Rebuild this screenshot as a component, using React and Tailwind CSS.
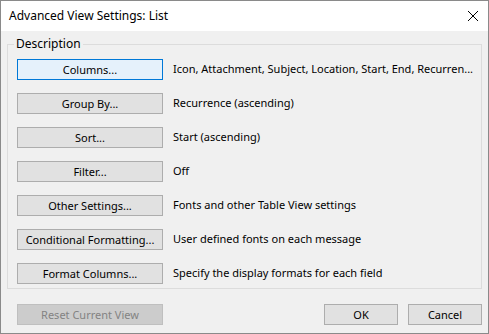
import React from 'react';

const rows = [
    { label: 'Columns...', desc: 'Icon, Attachment, Subject, Location, Start, End, Recurren...', focused: true },
    { label: 'Group By...', desc: 'Recurrence (ascending)' },
    { label: 'Sort...', desc: 'Start (ascending)' },
    { label: 'Filter...', desc: 'Off' },
    { label: 'Other Settings...', desc: 'Fonts and other Table View settings' },
    { label: 'Conditional Formatting...', desc: 'User defined fonts on each message' },
    { label: 'Format Columns...', desc: 'Specify the display formats for each field' },
];

const WinButton = ({ children, focused, disabled, className = '' }) => {
    let look = 'bg-[#e1e1e1] border-[#adadad] text-black';
    if (focused) look = 'bg-[#e5f1fb] border-[#0078d7] text-black';
    if (disabled) look = 'bg-[#cccccc] border-[#bfbfbf] text-[#838383]';
    return (
        <button
            disabled={disabled}
            className={`h-[21px] border flex items-center justify-center leading-none ${look} ${className}`}
        >
            {children}
        </button>
    );
};

export default function App() {
    return (
        <div
            className="w-[489px] h-[334px] flex flex-col border border-[#8a8a8a] bg-[#f0f0f0] text-[11px] text-black"
            style={{ fontFamily: '"Noto Sans", "Segoe UI", sans-serif' }}
        >
            {/* Title bar */}
            <div className="h-[30px] bg-white flex items-center justify-between pl-2">
                <span className="text-[12px]">Advanced View Settings: List</span>
                <svg width="30" height="30" viewBox="0 0 30 30" className="shrink-0">
                    <path d="M10 10 L20 20 M20 10 L10 20" stroke="#000" strokeWidth="1" />
                </svg>
            </div>

            <div className="flex-1 flex flex-col px-[6px]">
                <fieldset className="mt-[5px] border border-[#dcdcdc] pl-[9px] pr-2 pt-[7px] pb-[4px]">
                    <legend className="ml-[-3px] px-[2px] leading-[16px] text-[12px]">Description</legend>
                    <div className="flex flex-col gap-[13px]">
                        {rows.map((r) => (
                            <div key={r.label} className="flex items-center gap-[10px]">
                                <WinButton focused={r.focused} className="w-[146px] shrink-0">
                                    {r.label}
                                </WinButton>
                                <span className="whitespace-nowrap">{r.desc}</span>
                            </div>
                        ))}
                    </div>
                </fieldset>

                <div className="flex items-center mt-[15px] pl-[10px]">
                    <WinButton disabled className="w-[146px]">Reset Current View</WinButton>
                    <div className="flex-1" />
                    <WinButton className="w-[74px]">OK</WinButton>
                    <WinButton className="w-[74px] ml-[10px]">Cancel</WinButton>
                </div>
            </div>
        </div>
    );
}
